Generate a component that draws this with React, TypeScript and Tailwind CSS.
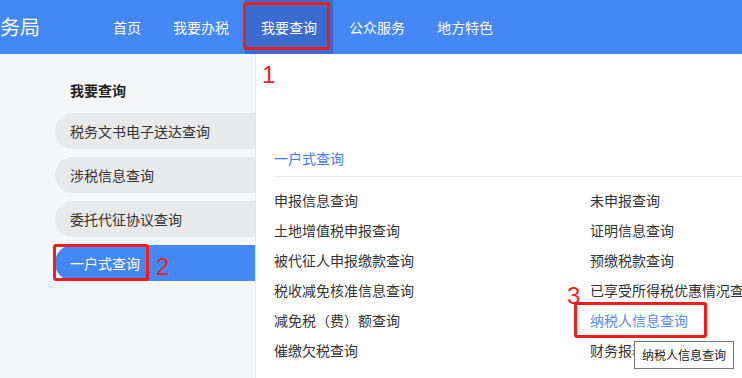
import React from "react";

const navItems = ["首页", "我要办税", "我要查询", "公众服务", "地方特色"];

const sideItems = ["税务文书电子送达查询", "涉税信息查询", "委托代征协议查询", "一户式查询"];

const leftCol = [
  "申报信息查询",
  "土地增值税申报查询",
  "被代征人申报缴款查询",
  "税收减免核准信息查询",
  "减免税（费）额查询",
  "催缴欠税查询",
];

const rightCol = [
  "未申报查询",
  "证明信息查询",
  "预缴税款查询",
  "已享受所得税优惠情况查询",
  "纳税人信息查询",
  "财务报表查询",
];

function Mark({ n, className }: { n: string; className: string }) {
  // red annotation digits drawn over the page
  return (
    <span
      className={`absolute text-[24px] leading-none text-[#f51d1d] font-['Liberation_Sans',sans-serif] ${className}`}
    >
      {n}
    </span>
  );
}

export default function App() {
  return (
    <div className="relative flex h-[378px] w-[742px] flex-col overflow-hidden bg-white font-['Noto_Sans_CJK_SC','Noto_Sans',sans-serif] text-[14px] text-[#333]">
      {/* Header */}
      <header className="flex h-[54px] shrink-0 items-stretch bg-[#4388f4] text-white">
        <div className="flex w-[97px] items-center whitespace-nowrap pb-[1px] text-[20px] leading-none">务局</div>
        <nav className="flex">
          {navItems.map((item, i) => (
            <div
              key={item}
              className={`relative flex items-center px-4 ${i === 2 ? "bg-[#3a6ccf]" : ""}`}
            >
              {item}
              {i === 2 && (
                <span className="absolute left-[-2px] top-[2px] h-[48px] w-[87px] rounded-[3px] border-[3px] border-[#f21c1c]" />
              )}
            </div>
          ))}
        </nav>
      </header>

      <div className="flex flex-1">
        {/* Sidebar */}
        <aside className="w-[256px] shrink-0 border-r border-[#e6e7ea] bg-[#f6f7f9] pt-[26px]">
          <div className="mb-[13px] pl-[70px] text-[14px] font-bold leading-[20px] text-[#222]">我要查询</div>
          <div className="flex flex-col gap-2 pl-[55px]">
            {sideItems.map((item, i) => {
              const active = i === sideItems.length - 1;
              return (
                <div
                  key={item}
                  className={`relative flex h-[36px] items-center rounded-l-full pl-[15px] ${
                    active ? "bg-[#4388f4] text-white" : "bg-[#e8e9eb] text-[#333]"
                  }`}
                >
                  {item}
                  {active && (
                    <>
                      <span className="absolute left-[-2px] top-[-1px] h-[37px] w-[96px] rounded-[3px] border-[3px] border-[#f21c1c]" />
                      <Mark n="2" className="left-[101px] top-[10px]" />
                    </>
                  )}
                </div>
              );
            })}
          </div>
        </aside>

        {/* Content */}
        <main className="relative flex-1 pl-[18px] pt-[94px]">
          <Mark n="1" className="left-[6px] top-[9px]" />
          <div className="border-b border-[#e8e8e8] pb-2 leading-[20px] text-[#3f7ff2]">一户式查询</div>
          <div className="mt-[8px] grid grid-cols-[316px_1fr]">
            <div className="flex flex-col">
              {leftCol.map((item) => (
                <div key={item} className="flex h-[30px] items-center whitespace-nowrap">
                  {item}
                </div>
              ))}
            </div>
            <div className="flex flex-col">
              {rightCol.map((item, i) => (
                <div key={item} className="relative flex h-[30px] items-center whitespace-nowrap">
                  {i === 4 ? (
                    <>
                      <span className="text-[#5a8df0]">{item}</span>
                      <span className="absolute left-[-16px] top-[-3px] h-[36px] w-[133px] rounded-[3px] border-[3px] border-[#f21c1c]" />
                      <Mark n="3" className="left-[-23px] top-[-21px]" />
                      <div className="absolute left-[44px] top-[36px] z-10 whitespace-nowrap border border-[#767676] bg-white px-[7px] py-[4px] text-[12px] leading-[18px] text-[#222]">
                        纳税人信息查询
                      </div>
                    </>
                  ) : (
                    item
                  )}
                </div>
              ))}
            </div>
          </div>
        </main>
      </div>
    </div>
  );
}
